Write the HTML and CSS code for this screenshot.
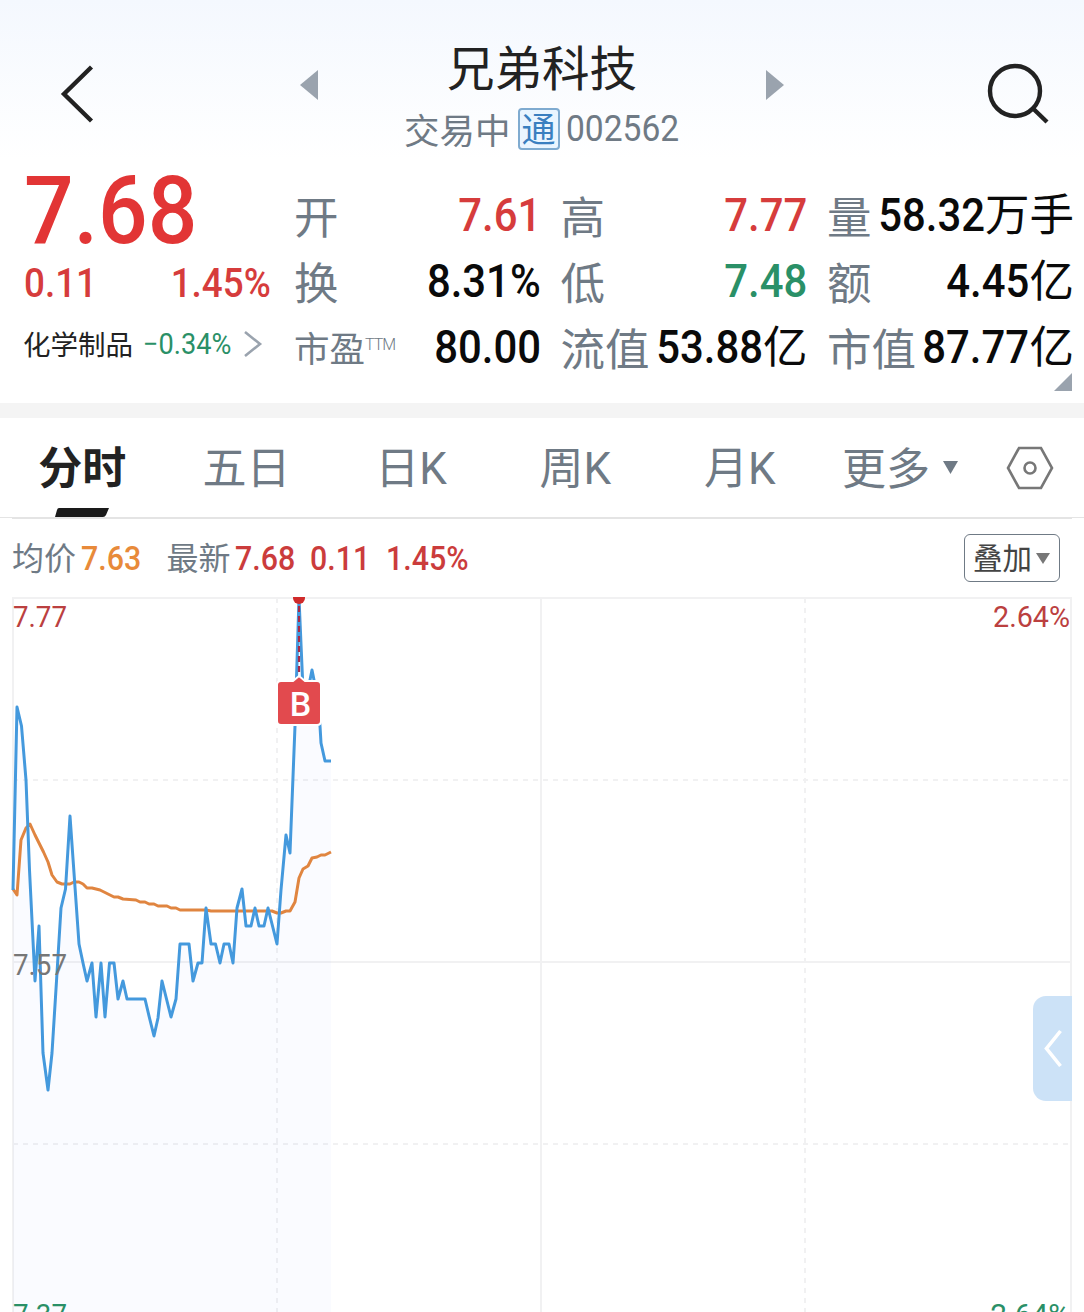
FILE: index.html
```html
<!DOCTYPE html>
<html lang="zh-CN">
  <head>
    <meta charset="utf-8">
    <title>兄弟科技 002562</title>
    <link rel="stylesheet" href="styles.css">
  </head>

  <body>
    <div class="page">
		<header class="header">
			<svg class="back" width="36" height="60" viewBox="0 0 36 60"><path d="M33.500 3L6 30L33.500 57" fill="none" stroke="#222" stroke-width="4.400"/></svg>
			<svg class="prev" width="18" height="30" viewBox="0 0 18 30"><path d="M0 15L18 0V30Z" fill="#9aa3ae"/></svg>
			<div class="title">
				<h1>兄弟科技</h1>
				<div class="sub">
					<span class="status">交易中</span>
					<span class="tag">通</span>
					<span class="code din">002562</span>
				</div>
			</div>
			<svg class="next" width="18" height="30" viewBox="0 0 18 30"><path d="M0 0L18 15L0 30Z" fill="#9aa3ae"/></svg>
			<svg class="search" width="64" height="62" viewBox="0 0 64 62"><circle cx="29" cy="28" r="25" fill="none" stroke="#222" stroke-width="4.400"/><path d="M47 45.500L61 59" stroke="#222" stroke-width="4.400"/></svg>
		</header>

		<section class="quote">
			<div class="price">
				<div class="last"><span class="din">7.68</span></div>
				<div class="change"><span class="din">0.11</span><span class="din din-right">1.45%</span></div>
				<div class="sector">
					<span class="sector-name">化学制品</span>
					<span class="pct din">−0.34%</span>
					<svg width="20" height="28" viewBox="0 0 20 28"><path d="M2 2L17 14L2 26" fill="none" stroke="#9aa3ae" stroke-width="2.600"/></svg>
				</div>
			</div>
			<div class="stats">
				<div class="stat"><label>开</label><b class="up"><span class="din din-right">7.61</span></b></div>
				<div class="stat"><label>高</label><b class="up"><span class="din din-right">7.77</span></b></div>
				<div class="stat"><label>量</label><b><span class="din din-right">58.32</span><i>万手</i></b></div>
				<div class="stat"><label>换</label><b><span class="din din-right">8.31%</span></b></div>
				<div class="stat"><label>低</label><b class="down"><span class="din din-right">7.48</span></b></div>
				<div class="stat"><label>额</label><b><span class="din din-right">4.45</span><i>亿</i></b></div>
				<div class="stat"><label class="small">市盈<sup>TTM</sup></label><b><span class="din din-right">80.00</span></b></div>
				<div class="stat"><label>流值</label><b><span class="din din-right">53.88</span><i>亿</i></b></div>
				<div class="stat"><label>市值</label><b><span class="din din-right">87.77</span><i>亿</i></b></div>
			</div>
			<svg class="expand" width="18" height="18" viewBox="0 0 18 18"><path d="M18 0V18H0Z" fill="#9aa3ae"/></svg>
		</section>

		<nav class="tabs">
			<div class="tab active">分时<svg class="mark" width="54" height="9" viewBox="0 0 54 9"><path d="M4 0H54L51 7Q50 9 48 9H0L2 2Q2.500 0 4 0Z" fill="#1a1a1a"/></svg></div>
			<div class="tab">五日</div>
			<div class="tab">日K</div>
			<div class="tab">周K</div>
			<div class="tab">月K</div>
			<div class="more"><span>更多</span><svg width="15" height="13" viewBox="0 0 15 13"><path d="M0 0H15L7.500 13Z" fill="#6f7a85"/></svg></div>
			<svg class="settings" width="48" height="44" viewBox="0 0 48 44"><path d="M13 2H35L46 22L35 42H13L2 22Z" fill="none" stroke="#777" stroke-width="2.600"/><circle cx="24" cy="22" r="5.500" fill="none" stroke="#777" stroke-width="2.600"/></svg>
		</nav>

		<div class="legend">
			<span class="name">均价</span><span class="avg din">7.63</span>
			<span class="name latest">最新</span><span class="num din">7.68</span><span class="num diff din">0.11</span><span class="num rate din">1.45%</span>
			<button class="overlay"><span>叠加</span><svg width="14" height="11" viewBox="0 0 14 11"><path d="M0 0H14L7 11Z" fill="#777"/></svg></button>
		</div>

		<div class="chart">
			<svg width="1084" height="715" viewBox="0 597 1084 715">
				<g class="grid">
					<path d="M13 1312V598H1071V1312M541 598V1312M13 962H1071"/>
					<path class="dash" d="M277 598V1312M805 598V1312M13 780H1071M13 1144H1071"/>
				</g>
				<path id="area" class="area"/>
				<polyline id="avg" class="avg-line"/>
				<polyline id="line" class="price-line"/>

				<circle cx="299" cy="598" r="6" fill="#d02a2a"/>
				<path d="M299 606V680" stroke="#a82a48" stroke-width="2.200" stroke-dasharray="6 4"/>
				<path d="M281 681H293L299 676L305 681H317Q321 681 321 685V721Q321 725 317 725H281Q277 725 277 721V685Q277 681 281 681Z" fill="#e24a4e" stroke="#fff" stroke-width="2"/>
				<text class="flag" x="300.500" y="716" text-anchor="middle">B</text>

				<g class="axis">
					<text class="red" x="13" y="627" textLength="54" lengthAdjust="spacingAndGlyphs">7.77</text>
					<text class="red" x="993" y="627" textLength="77" lengthAdjust="spacingAndGlyphs">2.64%</text>
					<text class="gray" x="13" y="975" textLength="54" lengthAdjust="spacingAndGlyphs">7.57</text>
					<text class="green" x="13" y="1325" textLength="54" lengthAdjust="spacingAndGlyphs">7.37</text>
					<text class="green" x="982" y="1325" textLength="88" lengthAdjust="spacingAndGlyphs">-2.64%</text>
				</g>
			</svg>
			<div class="drawer"><svg width="20" height="42" viewBox="0 0 20 42"><path d="M17.500 3L3.500 20.500L17.500 38" fill="none" stroke="#fff" stroke-width="3.600"/></svg></div>
		</div>
	</div>

    <script>
		const price = [
			[13,890],[17,707],[21.5,726],[26,780],[29.5,870],[35,981],[39,926],[43,1053],[48,1090],[52,1053],
			[56.5,981],[61,908],[65.5,889],[70,816],[74.5,880],[79,944],[83,963],[87,981],[92,963],[96,1017],
			[101,963],[105,1017],[109.5,963],[114,963],[118,999],[123,981],[127,999],[145,999],[149.5,1018],[154,1036],
			[158,1018],[162,981],[171,1017],[176,999],[180,944],[189,944],[193,981],[198,963],[202,963],[206,908],
			[211,944],[215.5,944],[220,963],[224,944],[229,944],[233,963],[237,908],[242,889],[246,926],[251,926],
			[255,908],[259,926],[264,926],[268,908],[277,944],[281,890],[286,835],[290,853],[295,726],[299,598],
			[303,690],[308,690],[312,670],[316,690],[320,726],[321,743],[325,761],[331,761]
		];
		const average = [
			[13,889],[17,895],[21,840],[26,828],[30,824],[35,835],[43.5,852],[48,862],[52,875],[57,882],
			[62,884],[70,884],[74,882],[79,882],[83,884],[87,888],[92,888],[100,890],[114,897],[118,897],
			[123,899],[136,900],[140,902],[145,902],[149,904],[154,904],[158,906],[167,906],[171,908],[176,908],
			[180,910],[206,910],[211,911],[272,911],[277,913],[281,913],[286,911],[290,911],[295,902],[299,878],
			[303,869],[308,866],[312,858],[317,857],[321,855],[325,855],[331,852]
		];

		document.getElementById('line').setAttribute('points', price.join(' '));
		document.getElementById('avg').setAttribute('points', average.join(' '));
		document.getElementById('area').setAttribute('d', `M13 1312L${price.join(' ')}V1312Z`);
    </script>
  </body>
</html>
```
FILE: styles.css
```css
* {
	padding: 0;
	margin: 0;
	box-sizing: border-box;
}

body {
	font-family: Roboto, "Noto Sans CJK SC", sans-serif;
	background: #fff;
	color: #222;
}

svg {
	display: block;
	flex: none;
}

.page {
	width: 1084px;
	height: 1312px;
	overflow: hidden;
	background: linear-gradient(#f4f8fe 0, #fff 160px);
}

/* narrow figures */
.din {
	display: inline-block;
	transform: scaleX(.92);
	transform-origin: left;
}

.din-right {
	transform-origin: right;
}

/* header */
.header {
	display: flex;
	align-items: flex-start;
	height: 160px;
	padding-left: 58px;
}

.back {
	margin-top: 64px;
}

.prev {
	margin-top: 70px;
	margin-left: 206px;
}

.title {
	width: 448px;
	padding-top: 40px;
	text-align: center;
}

.title h1 {
	font-size: 47.5px;
	line-height: 60px;
	font-weight: 400;
}

.sub {
	display: flex;
	align-items: center;
	height: 42px;
	margin-top: 8px;
	padding-left: 86px;
	color: #6f7a85;
	line-height: 42px;
}

.status {
	padding-top: 5px;
	font-size: 35.5px;
}

.tag {
	width: 42px;
	height: 42px;
	margin: 0 6px 0 7px;
	border: 2px solid #7fabd0;
	border-radius: 4px;
	background: #eaf5ff;
	color: #3a7fc0;
	font-size: 34px;
	line-height: 41px;
}

.code {
	font-size: 36.5px;
}

.next {
	margin-top: 70px;
}

.search {
	margin-top: 63px;
	margin-left: 202px;
}

/* quote */
.quote {
	position: relative;
	display: flex;
	height: 258px;
	border-bottom: 15px solid #f4f4f4;
}

.price {
	width: 247px;
	margin-left: 24px;
	color: #e23535;
}

.last {
	height: 90px;
	font-size: 95px;
	line-height: 102px;
	font-weight: 500;
}

.change {
	display: flex;
	justify-content: space-between;
	height: 66px;
	font-size: 40px;
	font-weight: 500;
	line-height: 68px;
	color: #d63c3c;
}

.sector {
	display: flex;
	align-items: center;
	height: 56px;
	font-size: 27.5px;
	white-space: nowrap;
}

.sector-name {
	margin: -3px 0 0 -1px;
	color: #222;
}

.sector .pct {
	margin: 0 4px 0 10px;
	font-size: 29.5px;
	color: #2a9067;
}

.stats {
	display: grid;
	grid-template-columns: repeat(3, 247px);
	grid-auto-rows: 66px;
	column-gap: 19.5px;
	height: 198px;
	margin: 23px 0 0 23px;
}

.stat {
	display: flex;
	justify-content: space-between;
	line-height: 66px;
	white-space: nowrap;
}

.stat label {
	padding-top: 3px;
	font-size: 44.5px;
	color: #6f7a85;
}

.stat label.small {
	padding-top: 2px;
	font-size: 35.5px;
}

.stat sup {
	font-size: 16px;
	font-weight: 300;
	letter-spacing: -1px;
	vertical-align: 12px;
	line-height: 0;
}

.stat b {
	margin-left: -20px;
	font-size: 45.5px;
	font-weight: 500;
	color: #0a0a0a;
}

.stat b i {
	font-size: 44.5px;
	font-style: normal;
	font-weight: 400;
}

.stat .up {
	color: #d63c3c;
}

.stat .down {
	color: #2a9067;
}

.expand {
	position: absolute;
	right: 12px;
	bottom: 12px;
}

/* period tabs */
.tabs {
	display: flex;
	align-items: center;
	height: 100px;
	border-bottom: 1px solid #e4e4e4;
	background: #fff;
	font-size: 44px;
	color: #6f7a85;
}

.tab {
	position: relative;
	width: 164.4px;
	height: 99px;
	line-height: 103px;
	text-align: center;
}

.tab.active {
	font-weight: 700;
	color: #222;
}

.mark {
	position: absolute;
	left: 55px;
	bottom: 0;
}

.more {
	display: flex;
	align-items: center;
	gap: 13px;
	margin-left: 20px;
}

.more span {
	margin-top: -4px;
}

.settings {
	margin-left: 48px;
}

/* legend */
.legend {
	display: flex;
	align-items: center;
	height: 79px;
	margin: 0 12px;
	border-top: 1px solid #e4e4e4;
	font-size: 33px;
	font-weight: 500;
}

.legend .name {
	margin-top: -4px;
	font-size: 32px;
	font-weight: 400;
	color: #6f7a85;
}

.legend .avg {
	margin-left: 5px;
	color: #e88a3a;
}

.legend .latest {
	margin-left: 20px;
}

.num {
	margin-left: 5px;
	color: #cb3c3c;
}

.legend .diff {
	margin-left: 9px;
}

.legend .rate {
	margin-left: 11px;
}

.overlay {
	display: flex;
	align-items: center;
	gap: 4px;
	width: 96px;
	height: 48px;
	margin-left: auto;
	margin-right: 12px;
	padding-left: 8px;
	border: 1px solid #6f7a85;
	border-radius: 6px;
	background: #fff;
	font-family: inherit;
	font-size: 29.5px;
	color: #444;
}

.overlay span {
	margin-top: -4px;
}

/* chart */
.chart {
	position: relative;
	height: 715px;
	background: #fff;
}

.grid path {
	fill: none;
	stroke: #f1f1f2;
	stroke-width: 2;
}

.grid .dash {
	stroke-dasharray: 5 5;
}

.area {
	fill: rgba(80, 130, 255, .03);
}

.price-line,
.avg-line {
	fill: none;
	stroke: #4499dd;
	stroke-width: 3;
	stroke-linejoin: round;
}

.avg-line {
	stroke: #e08540;
}

.flag {
	font-size: 34px;
	font-weight: 500;
	fill: #fff;
}

.axis text {
	font-size: 29.5px;
}

.axis .red {
	fill: #bb4040;
}

.axis .gray {
	fill: #777;
}

.axis .green {
	fill: #2a9067;
}

.drawer {
	position: absolute;
	right: 12px;
	top: 399px;
	width: 39px;
	height: 105px;
	padding: 32px 0 0 10px;
	border-radius: 13px 0 0 13px;
	background: #cce2f7;
}
```
